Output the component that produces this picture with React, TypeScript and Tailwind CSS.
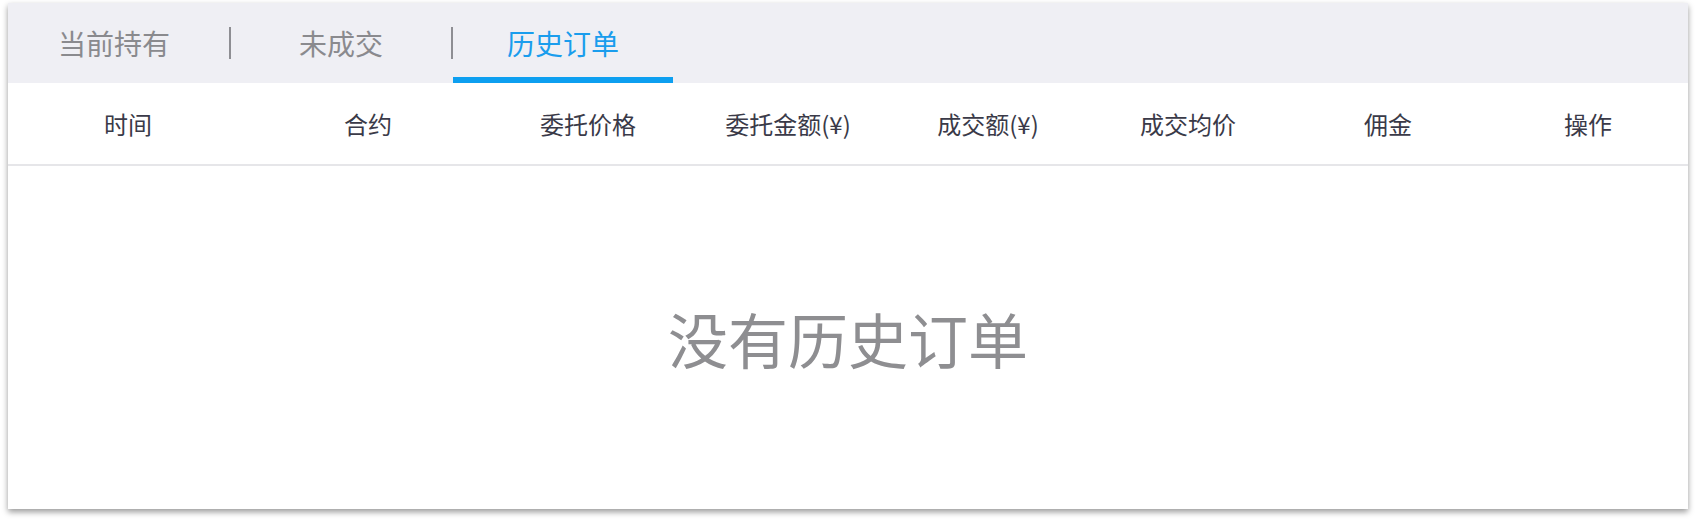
import React from 'react';

const tabs = [
    { label: '当前持有', active: false },
    { label: '未成交', active: false },
    { label: '历史订单', active: true },
];

const columns = [
    { label: '时间', width: 'w-[240px]' },
    { label: '合约', width: 'w-[240px]' },
    { label: '委托价格', width: 'w-[200px]' },
    { label: '委托金额(¥)', width: 'w-[200px]' },
    { label: '成交额(¥)', width: 'w-[200px]' },
    { label: '成交均价', width: 'w-[200px]' },
    { label: '佣金', width: 'w-[200px]' },
    { label: '操作', width: 'w-[200px]' },
];

const App: React.FC = () => {
    return (
        <div className="min-h-screen bg-white pt-[3px] pl-[8px]" style={{ fontFamily: '"Noto Sans CJK SC", "Noto Sans", sans-serif' }}>
            <div className="w-[1680px] h-[506px] bg-white flex flex-col shadow-[0_3px_6px_rgba(0,0,0,0.4)]">
                {/* tabs */}
                <div className="h-[80px] bg-[#efeff4] flex items-stretch">
                    {tabs.map((tab, i) => (
                        <div key={tab.label} className="flex items-stretch">
                            {i > 0 && <div className="w-[2px] h-[32px] self-center bg-[#8e8e93]" />}
                            <div
                                className={`relative flex items-center ${i === 0 ? 'w-[221px] pl-[50px]' : 'w-[220px] justify-center'} text-[28px] ${tab.active ? 'text-[#1a9ded]' : 'text-[#8a8a8e]'}`}
                            >
                                {tab.label}
                                {tab.active && <div className="absolute left-0 right-0 bottom-0 h-[6px] bg-[#0d9ff0]" />}
                            </div>
                        </div>
                    ))}
                </div>

                {/* table head */}
                <div className="h-[83px] flex items-center border-b-2 border-[#e6e6e9]">
                    {columns.map((col) => (
                        <div key={col.label} className={`${col.width} text-center text-[24px] text-[#3a3a48]`}>
                            {col.label}
                        </div>
                    ))}
                </div>

                {/* empty state */}
                <div className="flex-1 flex items-center justify-center pt-[1px]">
                    <span className="text-[60px] text-[#8e8e91]">没有历史订单</span>
                </div>
            </div>
        </div>
    );
};

export default App;
